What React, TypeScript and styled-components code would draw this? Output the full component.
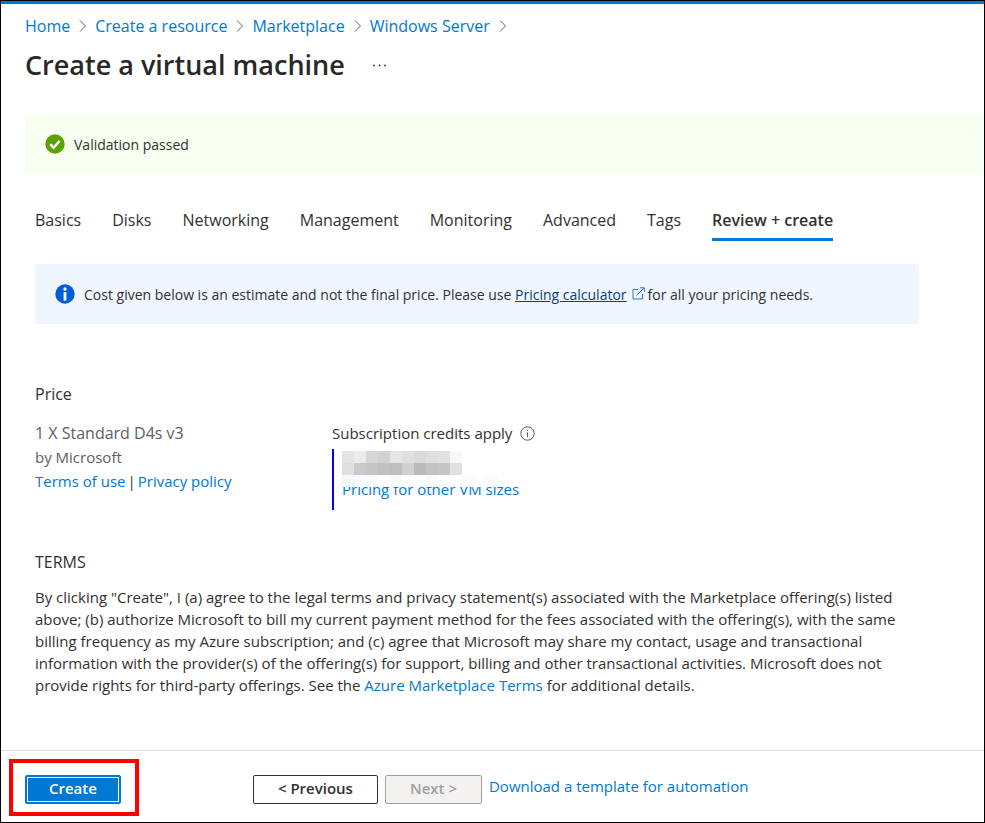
import React from "react";
import styled, { createGlobalStyle, css } from "styled-components";

const GlobalStyle = createGlobalStyle`
  *, *::before, *::after { box-sizing: border-box; }
  body { margin: 0; background: #fff; }
  body, button { font-family: "Open Sans", "Noto Sans", sans-serif; }
  h1, h2, p, ol, ul { margin: 0; padding: 0; font-weight: 400; }
`;

const Page = styled.div`
  min-height: 100vh;
  display: flex;
  flex-direction: column;
  border: 1px solid #000;
  color: #323130;
  font-size: 15px;
  line-height: 22px;
`;

const TopBar = styled.div`
  height: 3px;
  background: #0078d4;
`;

const Link = styled.a`
  color: #0078d4;
  text-decoration: none;
`;

const Header = styled.header`
  padding: 11px 24px 0;
`;

const Crumbs = styled.ol`
  display: flex;
  list-style: none;
  font-size: 16px;
`;

const Crumb = styled.li`
  display: flex;
  align-items: center;
`;

const CrumbArrow = styled.svg`
  width: 10px;
  height: 14px;
  margin: 0 7px 0 8px;
  fill: none;
  stroke: #605e5c;
`;

const TitleRow = styled.div`
  display: flex;
  align-items: center;
  gap: 24px;
  margin-top: 8px;
`;

const Title = styled.h1`
  font-size: 27px;
  line-height: 40px;
  font-weight: 600;
  color: #292827;
`;

const MoreButton = styled.button`
  display: flex;
  padding: 4px;
  border: 0;
  background: none;
`;

const Banner = styled.div<{ $tone: "success" | "info" }>`
  display: flex;
  align-items: center;
  gap: 9px;
  min-height: 60px;
  padding: 0 20px;
  border-radius: 2px;
  font-size: 14px;
  ${({ $tone }) =>
    $tone === "success"
      ? css`
          margin: 29px 0 0 24px;
          background: #f8fff0;
        `
      : css`
          background: #f0f6ff;
        `}
`;

const BannerText = styled.p`
  padding-top: 2px;
`;

const Body = styled.main`
  flex: 1;
  padding: 32px 65px 24px 34px;
`;

const Tabs = styled.div`
  display: flex;
  gap: 31px;
  margin-bottom: 23px;
`;

const Tab = styled.button<{ $active?: boolean }>`
  padding: 3px 0 7px;
  border: 0;
  border-bottom: 3px solid ${({ $active }) => ($active ? "#0078d4" : "transparent")};
  background: none;
  color: #323130;
  font-size: 16px;
  line-height: 22px;
  font-weight: ${({ $active }) => ($active ? 600 : 400)};
  white-space: nowrap;
`;

const CalculatorLink = styled.a`
  margin-right: 5px;
  color: #004578;
`;

const LinkIcon = styled.svg`
  width: 13px;
  height: 13px;
  margin-right: 3px;
  fill: none;
  stroke: #2b74e8;
`;

const SectionTitle = styled.h2`
  font-size: 16px;
  line-height: 22px;
`;

const PriceSection = styled.section`
  margin-top: 59px;
`;

const PriceColumns = styled.div`
  display: grid;
  grid-template-columns: 297px 1fr;
  margin-top: 16px;
`;

const Offer = styled.div`
  line-height: 24px;
  color: #605e5c;
`;

const OfferName = styled.p`
  font-size: 16px;
`;

const Divider = styled.span`
  margin: 0 2px;
  color: #323130;
`;

const CreditsLabel = styled.div`
  display: flex;
  align-items: center;
  gap: 8px;
  line-height: 24px;
`;

const CreditsBox = styled.div`
  position: relative;
  margin-top: 4px;
  padding: 29px 0 10px 8px;
  border-left: 2px solid #0000ee;
`;

const Mosaic = styled.div`
  position: absolute;
  top: 2px;
  left: 8px;
  display: grid;
  grid-template-columns: repeat(15, 12px);
  grid-template-rows: repeat(3, 12px);
`;

const MosaicCell = styled.span<{ $shade: string }>`
  background: ${({ $shade }) => $shade};
`;

const Terms = styled.section`
  margin-top: 41px;
`;

const TermsText = styled.p`
  margin-top: 13px;
  max-width: 868px;
`;

const Footer = styled.footer`
  display: flex;
  align-items: flex-start;
  padding: 8px 8px 6px;
  border-top: 1px solid #dcdcdc;
`;

const Highlight = styled.div`
  padding: 12px 14px 8px 12px;
  border: 4px solid #ff0000;
`;

const Button = styled.button<{ $kind: "primary" | "default" }>`
  display: block;
  height: 29px;
  border-radius: 2px;
  font-size: 15px;
  line-height: 20px;
  font-weight: 600;
  white-space: nowrap;
  ${({ $kind }) =>
    $kind === "primary"
      ? css`
          padding: 0 23px 3px;
          border: 1px solid #0078d4;
          background: #0078d4;
          color: #fff;
          outline: 1px solid #fff;
          outline-offset: -3px;
        `
      : css`
          padding: 0 24px 3px;
          border: 1px solid #323130;
          background: #fff;
          color: #323130;
        `}
  &:disabled {
    border-color: #a19f9d;
    background: #f3f2f1;
    color: #a19f9d;
  }
`;

const Pager = styled.div`
  display: flex;
  align-items: flex-start;
  gap: 7px;
  margin-left: 114px;
  padding-top: 16px;
`;

const tabs = ["Basics", "Disks", "Networking", "Management", "Monitoring", "Advanced", "Tags", "Review + create"];
const crumbs = ["Home", "Create a resource", "Marketplace", "Windows Server"];

const W = "#ffffff";
const mosaicRows = [
  ["#e5e5e5", "#ebebeb", "#d7d7d7", "#d2d2d0", "#e5e5e5", "#e0e0e0", "#dadada", "#dfdfdf", "#e1e1e1", "#f8f8f8", W, W, W, W, W],
  ["#e0e0e0", "#cacaca", "#c6c6c6", "#c1c1c1", "#bfbfbf", "#d0d0ce", "#bababa", "#c3c3c3", "#c5c5c5", "#e1e1e1", W, W, W, W, W],
  ["#f1f8ff", "#f8fbff", "#f8fbff", W, "#f5faff", W, W, "#f8fcff", W, W, "#f9fcff", "#fbfdff", "#f9fcff", W, W],
];

export default function App() {
  return (
    <>
      <GlobalStyle />
      <Page>
        <TopBar />
        <Header>
          <nav aria-label="Breadcrumb">
            <Crumbs>
              {crumbs.map((name) => (
                <Crumb key={name}>
                  <Link href="#">{name}</Link>
                  <CrumbArrow viewBox="0 0 10 14" aria-hidden="true">
                    <path d="M2 1.5 7.5 7 2 12.5" />
                  </CrumbArrow>
                </Crumb>
              ))}
            </Crumbs>
          </nav>
          <TitleRow>
            <Title>Create a virtual machine</Title>
            <MoreButton aria-label="More">
              <svg width="13" height="3" viewBox="0 0 13 3" fill="#323130" aria-hidden="true">
                <circle cx="1" cy="1.5" r=".9" />
                <circle cx="6.5" cy="1.5" r=".9" />
                <circle cx="12" cy="1.5" r=".9" />
              </svg>
            </MoreButton>
          </TitleRow>
        </Header>

        <Banner $tone="success" role="status">
          <svg width="20" height="20" viewBox="0 0 20 20" aria-hidden="true">
            <circle cx="10" cy="10" r="9.7" fill="#57a300" />
            <path d="m5.2 10.2 3.4 3.5 6-7" fill="none" stroke="#fff" strokeWidth="2.4" />
          </svg>
          <BannerText>Validation passed</BannerText>
        </Banner>

        <Body>
          <Tabs role="tablist">
            {tabs.map((name, i) => {
              const active = i === tabs.length - 1;
              return (
                <Tab key={name} role="tab" aria-selected={active} $active={active}>
                  {name}
                </Tab>
              );
            })}
          </Tabs>

          <Banner $tone="info">
            <svg width="20" height="20" viewBox="0 0 20 20" aria-hidden="true">
              <circle cx="10" cy="10" r="9.7" fill="#015cda" />
              <circle cx="10" cy="5" r="1.7" fill="#fff" />
              <path d="M8.6 8h2.8v8.6H8.6z" fill="#fff" />
            </svg>
            <BannerText>
              Cost given below is an estimate and not the final price. Please use{" "}
              <CalculatorLink href="#">Pricing calculator</CalculatorLink>
              <LinkIcon viewBox="0 0 13 13" aria-hidden="true">
                <path d="M6 2.5H1v9.5h9.5V7M4.5 8.5 12 1M8 .8h4.3V5" />
              </LinkIcon>
              for all your pricing needs.
            </BannerText>
          </Banner>

          <PriceSection>
            <SectionTitle>Price</SectionTitle>
            <PriceColumns>
              <Offer>
                <OfferName>1 X Standard D4s v3</OfferName>
                <p>by Microsoft</p>
                <p>
                  <Link href="#">Terms of use</Link>
                  <Divider>|</Divider>
                  <Link href="#">Privacy policy</Link>
                </p>
              </Offer>
              <div>
                <CreditsLabel>
                  Subscription credits apply
                  <svg width="15" height="15" viewBox="0 0 15 15" fill="none" stroke="#605e5c" aria-hidden="true">
                    <circle cx="7.5" cy="7.5" r="6.7" />
                    <path d="M7.5 6.3v5M7.5 3.8v1.2" />
                  </svg>
                </CreditsLabel>
                <CreditsBox>
                  <Link href="#">Pricing for other VM sizes</Link>
                  <Mosaic aria-hidden="true">
                    {mosaicRows.flat().map((shade, i) => (
                      <MosaicCell key={i} $shade={shade} />
                    ))}
                  </Mosaic>
                </CreditsBox>
              </div>
            </PriceColumns>
          </PriceSection>

          <Terms>
            <SectionTitle>TERMS</SectionTitle>
            <TermsText>
              By clicking "Create", I (a) agree to the legal terms and privacy statement(s) associated with the
              Marketplace offering(s) listed above; (b) authorize Microsoft to bill my current payment method for the
              fees associated with the offering(s), with the same billing frequency as my Azure subscription; and (c)
              agree that Microsoft may share my contact, usage and transactional information with the provider(s) of
              the offering(s) for support, billing and other transactional activities. Microsoft does not provide
              rights for third-party offerings. See the <Link href="#">Azure Marketplace Terms</Link> for additional
              details.
            </TermsText>
          </Terms>
        </Body>

        <Footer>
          <Highlight>
            <Button $kind="primary">Create</Button>
          </Highlight>
          <Pager>
            <Button $kind="default">&lt; Previous</Button>
            <Button $kind="default" disabled>
              Next &gt;
            </Button>
            <Link href="#">Download a template for automation</Link>
          </Pager>
        </Footer>
      </Page>
    </>
  );
}
